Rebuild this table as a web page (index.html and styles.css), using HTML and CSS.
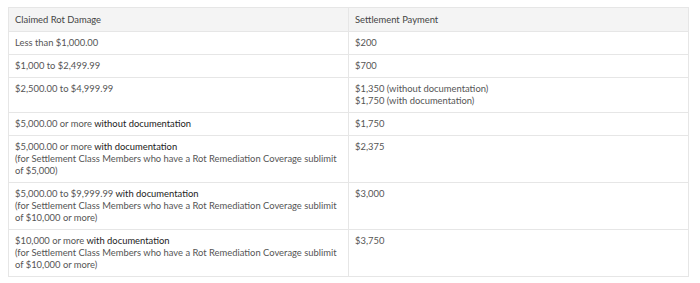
FILE: index.html
```html
<!DOCTYPE html>
<html>
<head>
<meta charset="utf-8">
<link rel="stylesheet" href="styles.css">
</head>
<body>
<table class="rot-table">
  <thead>
    <tr><th>Claimed Rot Damage</th><th>Settlement Payment</th></tr>
  </thead>
  <tbody>
    <tr><td>Less than $1,000.00</td><td>$200</td></tr>
    <tr><td>$1,000 to $2,499.99</td><td>$700</td></tr>
    <tr><td>$2,500.00 to $4,999.99</td><td>$1,350 (without documentation)<br>$1,750 (with documentation)</td></tr>
    <tr><td>$5,000.00 or more <strong>without documentation</strong></td><td>$1,750</td></tr>
    <tr><td>$5,000.00 or more <strong>with documentation</strong><br>(for Settlement Class Members who have a Rot Remediation Coverage sublimit<br>of $5,000)</td><td>$2,375</td></tr>
    <tr><td>$5,000.00 to $9,999.99 <strong>with documentation</strong><br>(for Settlement Class Members who have a Rot Remediation Coverage sublimit<br>of $10,000 or more)</td><td>$3,000</td></tr>
    <tr><td>$10,000 or more <strong>with documentation</strong><br>(for Settlement Class Members who have a Rot Remediation Coverage sublimit<br>of $10,000 or more)</td><td>$3,750</td></tr>
  </tbody>
</table>
</body>
</html>
```
FILE: styles.css
```css
body {
  margin: 0;
  padding: 7px 11px 0 8px;
  background: #fff;
  font-family: Lato, "Open Sans", sans-serif;
}
.rot-table {
  width: 681px;
  border-collapse: collapse;
  table-layout: fixed;
  font-size: 9.4px;
  line-height: 12px;
  color: #555;
}
.rot-table th,
.rot-table td {
  border: 1px solid #e6e6e6;
  padding: 5px 6px;
  text-align: left;
  vertical-align: top;
  white-space: nowrap;
}
.rot-table th {
  font-weight: normal;
  color: #444;
  background: #f4f4f4;
  padding: 6px 6px 5px;
}
.rot-table strong {
  font-weight: normal;
  color: #222;
}
```
